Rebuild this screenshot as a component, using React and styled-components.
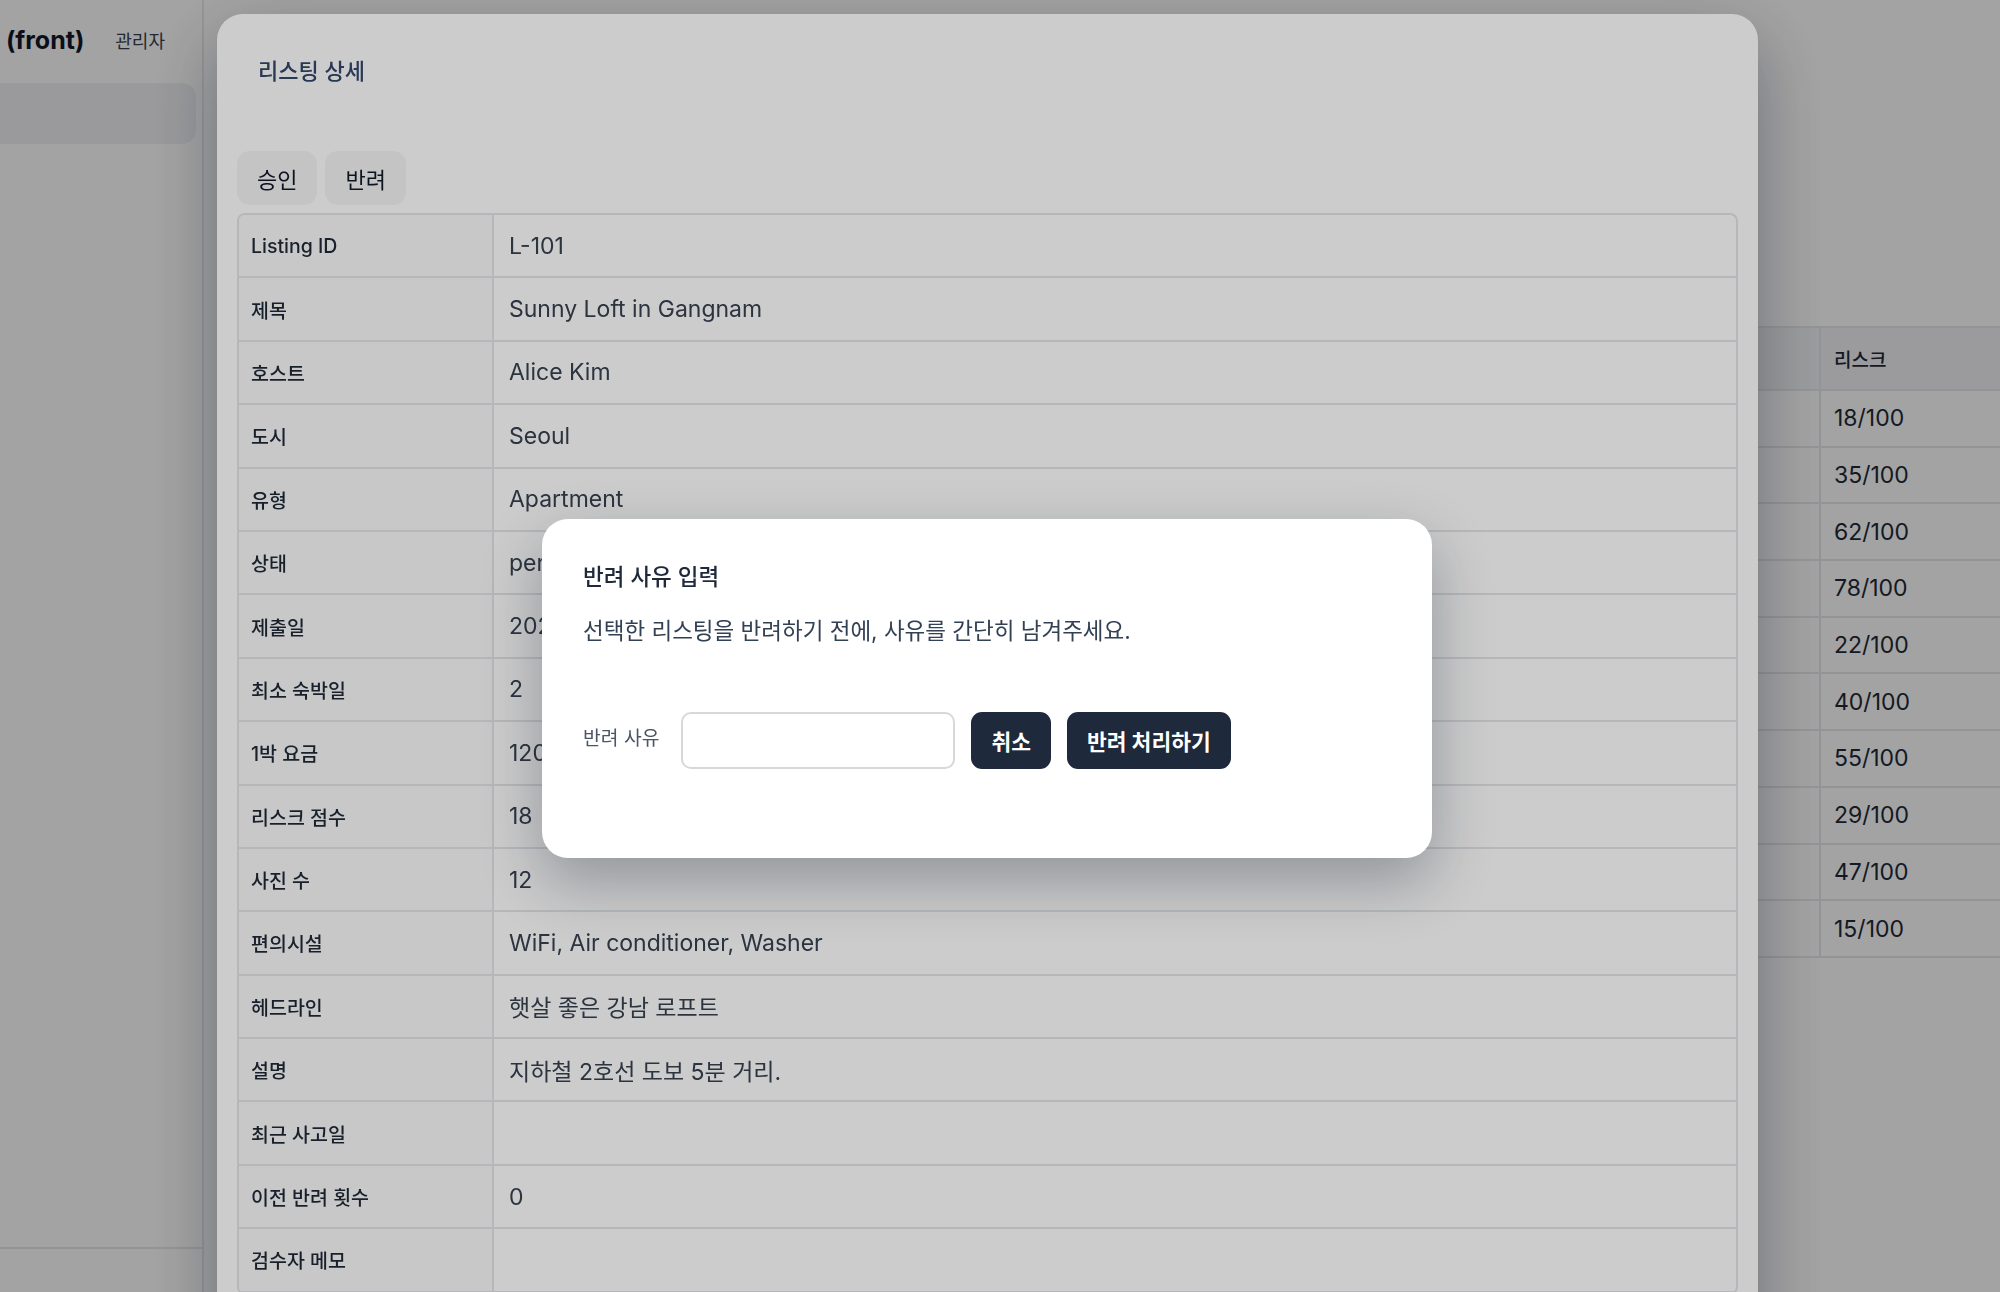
import styled, { createGlobalStyle } from "styled-components";

const GlobalStyle = createGlobalStyle`
  html, body {
    margin: 0;
    padding: 0;
    background: #fdfdfd;
    overflow: hidden;
  }
  body {
    font-family: Inter, "Noto Sans CJK KR", "Noto Sans", sans-serif;
    color: #1f2937;
  }
  * { box-sizing: border-box; }
`;

const listRisks = ["18/100", "35/100", "62/100", "78/100", "22/100", "40/100", "55/100", "29/100", "47/100", "15/100"];

const details = [
  ["Listing ID", "L-101"],
  ["제목", "Sunny Loft in Gangnam"],
  ["호스트", "Alice Kim"],
  ["도시", "Seoul"],
  ["유형", "Apartment"],
  ["상태", "pending"],
  ["제출일", "2024-05-12"],
  ["최소 숙박일", "2"],
  ["1박 요금", "120,000"],
  ["리스크 점수", "18"],
  ["사진 수", "12"],
  ["편의시설", "WiFi, Air conditioner, Washer"],
  ["헤드라인", "햇살 좋은 강남 로프트"],
  ["설명", "지하철 2호선 도보 5분 거리."],
  ["최근 사고일", ""],
  ["이전 반려 횟수", "0"],
  ["검수자 메모", ""],
];

export default function App() {
  return (
    <>
      <GlobalStyle />
      <Page>
        <Sidebar>
          <SidebarInner>
            <Brand>
              <BrandName>
                <BrandPrefix>Admin</BrandPrefix>(front)
              </BrandName>
              <BrandRole>관리자</BrandRole>
            </Brand>
            <NavItem $active>검수 대기</NavItem>
            <NavItem>반려 이력</NavItem>
            <NavItem>호스트</NavItem>
            <SidebarFooter />
          </SidebarInner>
        </Sidebar>
        <Main>
          <PageHead>
            <PageTitle>리스팅 검수</PageTitle>
            <PageSub>검수 대기 중인 리스팅 목록입니다.</PageSub>
          </PageHead>
          <QueueTable>
            <QueueRow $head>
              <QueueCell $w={180}>ID</QueueCell>
              <QueueCell $w={480}>제목</QueueCell>
              <QueueCell $w={260}>호스트</QueueCell>
              <QueueCell $w={220}>도시</QueueCell>
              <QueueCell $w={220}>상태</QueueCell>
              <QueueCell $w={223}>제출일</QueueCell>
              <QueueCell $w={240}>리스크</QueueCell>
            </QueueRow>
            {listRisks.map((r, i) => (
              <QueueRow key={i}>
                <QueueCell $w={180}>L-{101 + i}</QueueCell>
                <QueueCell $w={480}></QueueCell>
                <QueueCell $w={260}></QueueCell>
                <QueueCell $w={220}></QueueCell>
                <QueueCell $w={220}></QueueCell>
                <QueueCell $w={223}></QueueCell>
                <QueueCell $w={240}>{r}</QueueCell>
              </QueueRow>
            ))}
          </QueueTable>
        </Main>
      </Page>

      <Overlay />
      <DetailPanel>
        <PanelTitle>리스팅 상세</PanelTitle>
        <ActionBar>
          <GhostButton>승인</GhostButton>
          <GhostButton>반려</GhostButton>
        </ActionBar>
        <DetailTable>
          {details.map(([k, v]) => (
            <DetailRow key={k}>
              <DetailLabel>{k}</DetailLabel>
              <DetailValue>{v}</DetailValue>
            </DetailRow>
          ))}
        </DetailTable>
      </DetailPanel>

      <Overlay />
      <Dialog>
        <DialogTitle>반려 사유 입력</DialogTitle>
        <DialogText>선택한 리스팅을 반려하기 전에, 사유를 간단히 남겨주세요.</DialogText>
        <FormRow>
          <FieldLabel>반려 사유</FieldLabel>
          <ReasonInput type="text" />
          <DarkButton>취소</DarkButton>
          <DarkButton>반려 처리하기</DarkButton>
        </FormRow>
      </Dialog>
    </>
  );
}

const Page = styled.div`
  display: flex;
  width: 2000px;
  height: 1292px;
  overflow: hidden;
  background: #fdfdfd;
`;

const Sidebar = styled.aside`
  width: 204px;
  flex-shrink: 0;
  border-right: 2px solid #e8e9ec;
  overflow: hidden;
  display: flex;
  justify-content: flex-end;
`;

const SidebarInner = styled.div`
  width: 380px;
  flex-shrink: 0;
  display: flex;
  flex-direction: column;
  padding-top: 22px;
`;

const Brand = styled.div`
  display: flex;
  align-items: center;
  justify-content: flex-end;
  gap: 31px;
  padding-right: 37px;
  height: 36px;
  white-space: nowrap;
`;

const BrandName = styled.span`
  font-size: 25px;
  font-weight: 700;
  color: #111827;
`;

const BrandPrefix = styled.span`
  margin-right: 20px;
`;

const BrandRole = styled.span`
  font-size: 18px;
  color: #374151;
`;

const NavItem = styled.div`
  margin: ${(p) => (p.$active ? "25px 6px 0 0" : "40px 6px 0 0")};
  height: 61px;
  border-radius: 14px;
  background: ${(p) => (p.$active ? "#eff0f3" : "transparent")};
  display: flex;
  align-items: center;
  padding-left: 24px;
  font-size: 19px;
  color: #1f2937;
  white-space: nowrap;
`;

const SidebarFooter = styled.div`
  margin-top: auto;
  height: 45px;
  border-top: 2px solid #e5e7eb;
`;

const Main = styled.main`
  flex: 1;
  min-width: 0;
  overflow: hidden;
  padding: 40px 0 0 32px;
`;

const PageHead = styled.div`
  height: 286px;
`;

const PageTitle = styled.h1`
  margin: 0;
  font-size: 28px;
  font-weight: 700;
`;

const PageSub = styled.p`
  margin: 12px 0 0;
  font-size: 18px;
  color: #6b7280;
`;

const QueueTable = styled.div`
  width: max-content;
  border-top: 2px solid #e5e7eb;
`;

const QueueRow = styled.div`
  display: flex;
  height: ${(p) => (p.$head ? "63px" : "56.7px")};
  background: ${(p) => (p.$head ? "#f1f2f4" : "#fdfdfd")};
  border-bottom: 2px solid #e5e7eb;
  font-size: ${(p) => (p.$head ? "19px" : "23px")};
  font-weight: ${(p) => (p.$head ? 500 : 400)};
  color: #1f2937;
`;

const QueueCell = styled.div`
  width: ${(p) => p.$w}px;
  padding-left: 13px;
  display: flex;
  align-items: center;
  border-left: 2px solid #e5e7eb;
`;

const Overlay = styled.div`
  position: fixed;
  inset: 0;
  background: rgba(0, 0, 0, 0.2);
`;

const DetailPanel = styled.section`
  position: fixed;
  left: 217px;
  top: 14px;
  width: 1541px;
  height: 1400px;
  background: #ffffff;
  border-radius: 26px;
  padding: 20px;
  box-shadow: 0 25px 70px -6px rgba(15, 23, 42, 0.4);
`;

const PanelTitle = styled.h2`
  margin: 0;
  padding: 22px 21px 0;
  height: 117px;
  font-size: 22px;
  line-height: 30px;
  font-weight: 500;
  color: #34466a;
`;

const ActionBar = styled.div`
  display: flex;
  gap: 8px;
  margin-bottom: 8px;
`;

const GhostButton = styled.button`
  height: 54px;
  padding: 0 20px;
  border: none;
  border-radius: 13px;
  background: #f6f6f7;
  font-family: inherit;
  font-size: 22px;
  color: #111827;
`;

const DetailTable = styled.div`
  border: 2px solid #e3e5e9;
  border-radius: 8px;
  overflow: hidden;
`;

const DetailRow = styled.div`
  display: grid;
  grid-template-columns: 255px 1fr;
  height: 63.4px;
  border-bottom: 2px solid #e3e5e9;
`;

const DetailLabel = styled.div`
  display: flex;
  align-items: center;
  padding-left: 12px;
  background: #fbfbfb;
  border-right: 2px solid #e3e5e9;
  font-size: 19.5px;
  font-weight: 500;
  color: #1f2937;
`;

const DetailValue = styled.div`
  display: flex;
  align-items: center;
  padding-left: 15px;
  font-size: 23px;
  color: #374151;
`;

const Dialog = styled.div`
  position: fixed;
  left: 542px;
  top: 519px;
  width: 890px;
  height: 339px;
  background: #ffffff;
  border-radius: 26px;
  padding: 44px 41px;
  box-shadow: 0 24px 60px rgba(15, 23, 42, 0.3);
`;

const DialogTitle = styled.h3`
  margin: 0;
  font-size: 22.5px;
  line-height: 28px;
  font-weight: 500;
  color: #1e293b;
`;

const DialogText = styled.p`
  margin: 26px 0 0;
  font-size: 22.5px;
  line-height: 28px;
  color: #334155;
`;

const FormRow = styled.div`
  display: flex;
  align-items: center;
  gap: 16px;
  margin-top: 67px;
`;

const FieldLabel = styled.span`
  font-size: 19.3px;
  color: #4b5563;
  margin-right: 6px;
  margin-top: -8px;
`;

const ReasonInput = styled.input`
  width: 274px;
  height: 57px;
  border: 2px solid #d6d8dc;
  border-radius: 10px;
  font-family: inherit;
  font-size: 20px;
  padding: 0 14px;
  outline: none;
`;

const DarkButton = styled.button`
  height: 57px;
  padding: 0 20px;
  border: none;
  border-radius: 11px;
  background: #1e293b;
  color: #ffffff;
  font-family: inherit;
  font-size: 21.5px;
  font-weight: 700;
`;
